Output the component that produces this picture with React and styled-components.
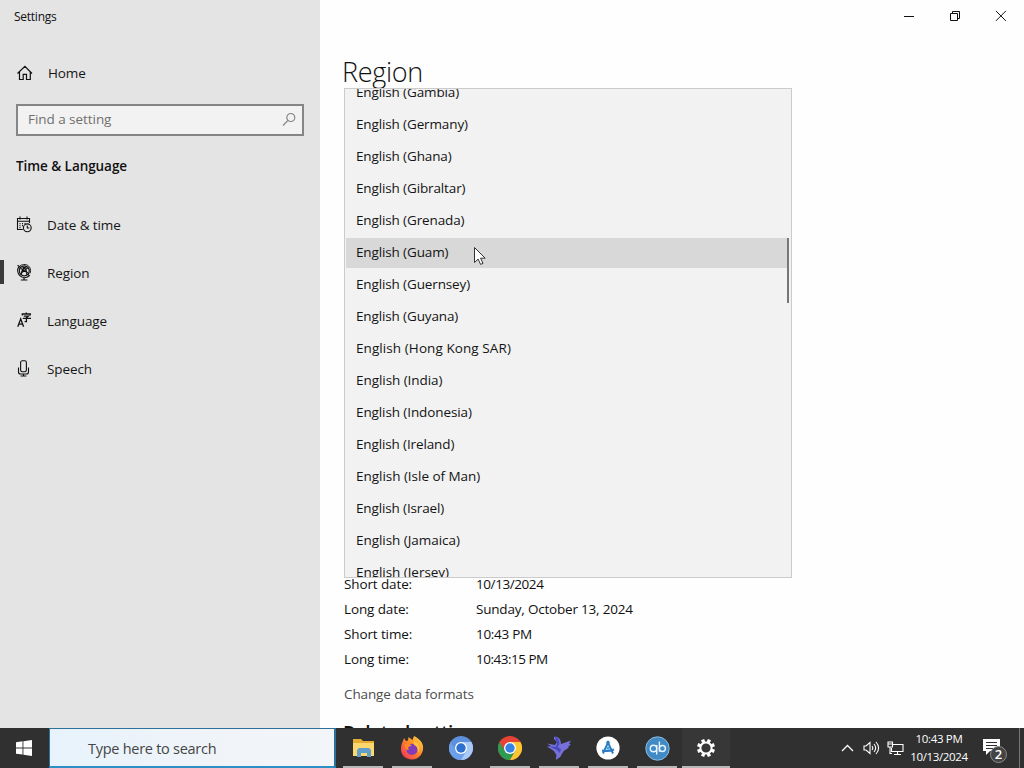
import React from 'react';
import styled, { createGlobalStyle } from 'styled-components';

const GlobalStyle = createGlobalStyle`
  * {
    box-sizing: border-box;
  }

  body {
    margin: 0;
    overflow: hidden;
    font-family: 'Open Sans', 'Noto Sans', sans-serif;
    font-size: 13.5px;
    color: #111;
  }

  svg {
    display: block;
    flex: none;
  }
`;

const Desktop = styled.div`
  position: relative;
  display: flex;
  flex-direction: column;
  width: 1024px;
  height: 768px;
  overflow: hidden;
`;

const Window = styled.div`
  display: flex;
  height: 728px;
  overflow: hidden;
  background: #fefefe;
`;

// Sidebar
const Sidebar = styled.aside`
  display: flex;
  flex-direction: column;
  width: 320px;
  background: #e4e4e4;
`;

const WindowTitle = styled.div`
  height: 49px;
  padding: 8px 14px;
  font-size: 12px;
  line-height: 18px;
  letter-spacing: -0.25px;
`;

const NavItem = styled.a`
  display: flex;
  align-items: center;
  height: 48px;
  border-left: 4px solid ${({ $selected }) => ($selected ? '#3c3a38' : 'transparent')};
  border-image: ${({ $selected }) =>
    $selected
      ? 'linear-gradient(transparent 11px, #3c3a38 11px, #3c3a38 35px, transparent 35px) 0 0 0 4'
      : 'none'};
  padding-left: 12px;
  gap: 15px;
  letter-spacing: -0.1px;
  color: #161616;

  svg {
    margin-bottom: ${({ $lift }) => $lift || 0}px;
  }
`;

const SearchBox = styled.div`
  display: flex;
  align-items: center;
  justify-content: space-between;
  width: 288px;
  height: 32px;
  margin: 7px 16px 0;
  padding: 0 6px 2px 10px;
  border: 2px solid #858585;
  background: #f2f2f2;
  letter-spacing: -0.05px;
  color: #707070;
`;

const Category = styled.h2`
  height: 24px;
  margin: 18px 16px 23px;
  font-size: 13.5px;
  font-weight: 600;
  line-height: 24px;
  letter-spacing: -0.06px;
`;

// Main pane
const Main = styled.main`
  display: flex;
  flex: 1;
  flex-direction: column;
`;

const Controls = styled.div`
  display: flex;
  align-items: center;
  justify-content: flex-end;
  height: 32px;
`;

const ControlButton = styled.span`
  display: flex;
  align-items: center;
  justify-content: center;
  width: 46px;
  height: 32px;
`;

const Heading = styled.h1`
  height: 38px;
  margin: 21px 0 481px 22px;
  font-size: 27px;
  font-weight: 350;
  line-height: 38px;
  letter-spacing: -0.3px;
`;

const Formats = styled.dl`
  display: grid;
  grid-template-columns: 132px auto;
  grid-auto-rows: 25px;
  margin: 0 0 0 24px;
  line-height: 25px;
`;

const Term = styled.dt`
  letter-spacing: -0.12px;
`;

const Value = styled.dd`
  margin: 0;
  letter-spacing: ${({ $spacing }) => $spacing}px;
`;

const FormatLink = styled.a`
  height: 24px;
  margin: 10px 0 0 24px;
  line-height: 24px;
  letter-spacing: -0.12px;
  color: #4c4c4c;
`;

const Related = styled.h3`
  margin: 12px 0 0 23px;
  font-size: 19px;
  font-weight: 600;
  line-height: 30px;
  letter-spacing: -0.4px;
`;

// Open combo box list, floats over the page
const Menu = styled.div`
  position: absolute;
  top: 88px;
  left: 344px;
  width: 448px;
  height: 490px;
  overflow: hidden;
  border: 1px solid #cbcbcb;
  background: #f2f2f2;
`;

const MenuList = styled.ul`
  margin: -13px 2px 0 1px;
  padding: 0;
  list-style: none;
`;

const MenuItem = styled.li`
  height: 32px;
  padding-left: 10px;
  line-height: 32px;
  letter-spacing: ${({ $spacing }) => $spacing}px;
  color: #141414;
  background: ${({ $active }) =>
    $active
      ? 'linear-gradient(transparent 2px, #d8d8d8 2px, #d8d8d8 calc(100% - 0px))'
      : 'transparent'};
`;

const MenuThumb = styled.span`
  position: absolute;
  top: 149px;
  right: 2px;
  width: 2px;
  height: 65px;
  background: #777;
`;

const Cursor = styled.svg`
  position: absolute;
  top: 246px;
  left: 473px;
`;

// Taskbar
const Bar = styled.footer`
  display: flex;
  height: 40px;
  background: #303030;
  color: #fff;
`;

const StartButton = styled.span`
  display: flex;
  align-items: center;
  justify-content: center;
  width: 48px;
`;

const TaskSearch = styled.div`
  width: 287px;
  margin-left: 1px;
  padding-left: 38px;
  border: 1px solid #2b7199;
  border-right-width: 2px;
  border-bottom: 2px solid #2e8fc4;
  background: linear-gradient(90deg, #e7f3fc, #f0f4f9 60%, #f3f5f8);
  font-size: 14.5px;
  line-height: 39px;
  letter-spacing: -0.27px;
  color: #454545;
`;

const Apps = styled.div`
  display: flex;
  gap: 1px;
  padding-left: 3px;
`;

const AppButton = styled.span`
  display: flex;
  align-items: center;
  justify-content: center;
  width: 48px;
  height: 40px;
  padding-top: 2px;
  border-bottom: 2px solid transparent;
  border-image: ${({ $running, $active }) =>
    $running
      ? `linear-gradient(90deg, transparent ${$active ? 0 : 4}px, #b8b8b8 ${$active ? 0 : 4}px, #b8b8b8 ${
          $active ? 48 : 44
        }px, transparent ${$active ? 48 : 44}px) 0 0 2`
      : 'none'};
  background: ${({ $active }) => ($active ? '#373737' : 'transparent')};
`;

const Tray = styled.div`
  display: flex;
  align-items: center;
  margin-left: auto;
`;

const TrayIcon = styled.span`
  display: flex;
  justify-content: center;
  width: 24px;
`;

const Clock = styled.div`
  width: 64px;
  font-size: 11.5px;
  line-height: 18px;
  letter-spacing: -0.35px;
  text-align: center;
  white-space: nowrap;
`;

const ActionCenter = styled.span`
  position: relative;
  width: 24px;
  height: 24px;
  margin: 5px 12px 0 12px;
`;

const Badge = styled.span`
  position: absolute;
  top: 7px;
  left: 7px;
  width: 17px;
  height: 17px;
  border: 1px solid #8c8c8c;
  border-radius: 50%;
  background: #444;
  font-size: 13px;
  font-weight: 600;
  line-height: 15px;
  text-align: center;
`;

const ShowDesktop = styled.span`
  width: 5px;
  height: 40px;
  border-left: 1px solid #777;
`;

function HomeIcon() {
  return (
    <svg width="17" height="16" viewBox="0 0 17 16" fill="none" stroke="#111" strokeWidth="1.2">
      <path d="M1.5 8.5 8.9 1.4l7.1 7.1M3.5 7v7.5h3.7V9.4h3.3v5.1h3.8V7" />
    </svg>
  );
}

function SearchIcon() {
  return (
    <svg width="14" height="14" viewBox="0 0 14 14" fill="none" stroke="#858585" strokeWidth="1.2">
      <circle cx="8.8" cy="5.5" r="4" />
      <path d="m6 8.3-5 5.2" />
    </svg>
  );
}

function CalendarIcon() {
  return (
    <svg width="16" height="17" viewBox="0 0 16 17" fill="none" stroke="#111" strokeWidth="1.1">
      <path d="M6.8 13.5H1.5v-11h12v4.5M1.5 5.2h12M4 .5v3M11 .5v3" />
      <path d="M3.5 7.6h1M6 7.6h1M8.5 7.6h1M3.5 9.6h1M6 9.6h1M3.5 11.6h1" />
      <circle cx="11.3" cy="11.8" r="3.9" />
      <path d="M11.3 9.4v2.6h2" />
    </svg>
  );
}

function GlobeIcon() {
  return (
    <svg width="16" height="17" viewBox="0 0 16 17" fill="none" stroke="#111" strokeWidth="1.2">
      <circle cx="8.3" cy="6.8" r="5" />
      <path d="M5 4.4 11.8 9M4.9 9.4 11.6 4M6 2.6c3.3 1 5.4 4.6 4.7 8.2M5.6 11c-.6-3.6 1.4-7.2 5-8.4" />
      <path d="M2.9 2.6a7 7 0 0 0 9.9 9.6M1.6 1.2l3.2 2.6M11.8 10.2l2 1.9M8 13.8V16M4.8 16h6.6" />
      <path d="M4 1.8C7-.2 11.4-.1 13.6 3.2c1.2 2 1.3 4.4.4 6.3" strokeWidth=".9" />
    </svg>
  );
}

function LanguageIcon() {
  return (
    <svg width="16" height="16" viewBox="0 0 16 16" fill="none" stroke="#111" strokeWidth="1.3">
      <path d="m1.8 14.8 2.9-8 2.9 8M2.8 12.2h3.8" />
      <path d="M6.3 3.4V2h8v1.4M10.3.4V2M7.8 4.1h4.6l-2 1.7v3.9H8.6M6.8 6.4h8.2" />
    </svg>
  );
}

function MicIcon() {
  return (
    <svg width="16" height="17" viewBox="0 0 16 17" fill="none" stroke="#111" strokeWidth="1.1">
      <rect x="4.6" y=".8" width="5.8" height="11" rx="1.7" />
      <path d="M2.5 7.5V12q0 2 2 2h6q2 0 2-2V7.5M7.5 14v2M4.6 16h5.8" />
    </svg>
  );
}

function FolderIcon() {
  return (
    <svg width="23" height="20" viewBox="0 0 23 20">
      <path d="M1 1h8l2 2h11v15H1z" fill="#e5ad32" />
      <path d="M1 5h21v13H1z" fill="#fbd76d" />
      <path d="M5 19v-7l2-2h10l2 2v7h-4v-4H9v4z" fill="#5f9fc9" />
    </svg>
  );
}

function FirefoxIcon() {
  return (
    <svg width="24" height="24" viewBox="0 0 24 24">
      <defs>
        <linearGradient id="fox" x1="1" y1="0" x2="0" y2="1">
          <stop offset="0" stopColor="#ffe14a" />
          <stop offset=".45" stopColor="#ff8a25" />
          <stop offset="1" stopColor="#f22865" />
        </linearGradient>
      </defs>
      <path
        d="M3 5 4 2l2 3 2-.5L8.5 1l4 3L14 0c4 2 8 5 9 10 1 7-4 13.5-11 13.5S.5 18.5 1 12c.2-3 1-5 2-7z"
        fill="url(#fox)"
      />
      <circle cx="12" cy="13.4" r="5.6" fill="#843bb9" />
      <path d="M5 8c3-1 5 0 7 2-3 0-5 1-3 4-3 0-5-2-4-6z" fill="#ff8827" />
      <path d="M14 5c5 2 7 7 4 12 0-5-1-7-4-8z" fill="#ffc33c" />
    </svg>
  );
}

function ChromeIcon({ colors }) {
  return (
    <svg width="24" height="24" viewBox="0 0 24 24">
      <circle cx="12" cy="12" r="12" fill={colors[0]} />
      <path d="M1.6 6A12 12 0 0 0 12 24l5.2-9H6.8z" fill={colors[1]} />
      <path d="M22.4 6A12 12 0 0 1 12 24l5.2-9L12 6z" fill={colors[2]} />
      <circle cx="12" cy="12" r="6" fill="#fff" />
      <circle cx="12" cy="12" r="4.7" fill={colors[3]} />
    </svg>
  );
}

function BirdIcon() {
  return (
    <svg width="26" height="24" viewBox="0 0 26 24">
      <path
        d="M8 1c3-1 6 1 6.5 4l.5 3L25 4.5l-2 3.2 2 .2-3 3 .8.5-5 3.5-2 3-1.5 3-4.5 3 .6-5-2.5-4L1 10.5l4-.5L1 7.5 9 9l2-3-3-3z"
        fill="#7670d8"
      />
      <path d="M9 1c3 0 4.5 3 4.5 7l-2 3 3.5 2-1 4-4-3.5L2 10l7.5 1 1.5-3z" fill="#4a4abf" />
    </svg>
  );
}

function AppStoreIcon() {
  return (
    <svg width="24" height="24" viewBox="0 0 24 24" fill="none">
      <circle cx="12" cy="12" r="11.6" fill="#fff" />
      <path d="m7 17.5 5-11 5 11M6 14.5q6 1.5 12-1" stroke="#2d79c2" strokeWidth="1.9" />
      <circle cx="12" cy="6.5" r="1.7" fill="#2d79c2" />
      <circle cx="12" cy="12.2" r="1.6" fill="#39afe5" />
    </svg>
  );
}

function QbIcon() {
  return (
    <svg width="25" height="25" viewBox="0 0 25 25" fill="none">
      <circle cx="12.5" cy="12.5" r="11.7" fill="#418ac6" stroke="#8abce2" />
      <circle cx="8.5" cy="12.5" r="3.2" stroke="#e6f5ff" strokeWidth="1.4" />
      <path d="M11.7 9v9.5M14.4 5.5v10.3" stroke="#e6f5ff" strokeWidth="1.4" />
      <circle cx="17.4" cy="12.5" r="3" stroke="#e6f5ff" strokeWidth="1.4" />
    </svg>
  );
}

function GearIcon() {
  return (
    <svg width="20" height="20" viewBox="0 0 20 20" fill="none" stroke="#fff">
      <circle cx="10" cy="10" r="5.6" strokeWidth="2" />
      {[0, 45, 90, 135, 180, 225, 270, 315].map(angle => (
        <path key={angle} d="M10 1v3" strokeWidth="3.4" transform={`rotate(${angle + 22.5} 10 10)`} />
      ))}
    </svg>
  );
}

const navigation = [
  { label: 'Date & time', icon: <CalendarIcon />, lift: 2 },
  { label: 'Region', icon: <GlobeIcon />, selected: true, lift: 1 },
  { label: 'Language', icon: <LanguageIcon />, lift: 2 },
  { label: 'Speech', icon: <MicIcon />, lift: 2 }
];

const regions = [
  { name: 'Gambia' },
  { name: 'Germany' },
  { name: 'Ghana' },
  { name: 'Gibraltar' },
  { name: 'Grenada' },
  { name: 'Guam', active: true },
  { name: 'Guernsey' },
  { name: 'Guyana' },
  { name: 'Hong Kong SAR', spacing: 0.08 },
  { name: 'India', spacing: -0.06 },
  { name: 'Indonesia', spacing: -0.1 },
  { name: 'Ireland' },
  { name: 'Isle of Man', spacing: -0.03 },
  { name: 'Israel', spacing: -0.14 },
  { name: 'Jamaica', spacing: -0.04 },
  { name: 'Jersey', spacing: -0.04 }
];

const formats = [
  { term: 'Short date:', value: '10/13/2024', spacing: -0.42 },
  { term: 'Long date:', value: 'Sunday, October 13, 2024', spacing: -0.2 },
  { term: 'Short time:', value: '10:43 PM', spacing: -0.3 },
  { term: 'Long time:', value: '10:43:15 PM', spacing: -0.5 }
];

const apps = [
  { id: 'explorer', icon: <FolderIcon />, running: true },
  { id: 'firefox', icon: <FirefoxIcon />, running: true },
  { id: 'chromium', icon: <ChromeIcon colors={['#5d91de', '#6d9ee8', '#a9c9f7', '#2d70cf']} /> },
  {
    id: 'chrome',
    icon: <ChromeIcon colors={['#e64336', '#2d9c50', '#fbc92f', '#3484e4']} />,
    running: true
  },
  { id: 'bird', icon: <BirdIcon />, running: true },
  { id: 'store', icon: <AppStoreIcon />, running: true },
  { id: 'qb', icon: <QbIcon />, running: true },
  { id: 'settings', icon: <GearIcon />, running: true, active: true }
];

function SettingsSidebar() {
  return (
    <Sidebar>
      <WindowTitle>Settings</WindowTitle>
      <NavItem $lift={1}>
        <HomeIcon />
        Home
      </NavItem>
      <SearchBox>
        Find a setting
        <SearchIcon />
      </SearchBox>
      <Category>Time &amp; Language</Category>
      {navigation.map(item => (
        <NavItem key={item.label} $selected={item.selected} $lift={item.lift}>
          {item.icon}
          {item.label}
        </NavItem>
      ))}
    </Sidebar>
  );
}

function RegionMenu() {
  return (
    <Menu>
      <MenuList>
        {regions.map(({ name, active, spacing = -0.13 }) => (
          <MenuItem key={name} $active={active} $spacing={spacing}>
            English ({name})
          </MenuItem>
        ))}
      </MenuList>
      <MenuThumb />
    </Menu>
  );
}

function Taskbar() {
  return (
    <Bar>
      <StartButton>
        <svg width="16" height="16" viewBox="0 0 16 16" fill="#fff">
          <path d="M0 2.2 6.5 1.3v6.2H0zM7.4 1.2 16 0v7.5H7.4zM0 8.4h6.5v6.2L0 13.7zM7.4 8.4H16V16l-8.6-1.2z" />
        </svg>
      </StartButton>
      <TaskSearch>Type here to search</TaskSearch>
      <Apps>
        {apps.map(app => (
          <AppButton key={app.id} $running={app.running} $active={app.active}>
            {app.icon}
          </AppButton>
        ))}
      </Apps>
      <Tray>
        <TrayIcon>
          <svg width="13" height="8" viewBox="0 0 13 8" fill="none" stroke="#fff" strokeWidth="1.3">
            <path d="m1 7 5.5-5.5L12 7" />
          </svg>
        </TrayIcon>
        <TrayIcon>
          <svg width="17" height="14" viewBox="0 0 17 14" fill="none" stroke="#fff" strokeWidth="1.1">
            <path d="M1 5v4h2l4 3.5v-11L3 5zM9 5q1.6 2 0 4M11 3q3.4 4 0 8M13 1q5.2 6 0 12" />
          </svg>
        </TrayIcon>
        <TrayIcon>
          <svg width="17" height="15" viewBox="0 0 17 15" fill="none" stroke="#fff" strokeWidth="1.1">
            <path d="M6 3.5h10v7H4.5V7M7 13.5h7M10.5 10.5v3M1 1h4.5v5H1zM1 3h4.5M3 6v6.5h2" />
          </svg>
        </TrayIcon>
        <Clock>
          <div>10:43 PM</div>
          <div>10/13/2024</div>
        </Clock>
        <ActionCenter>
          <svg width="18" height="17" viewBox="0 0 18 17">
            <path d="M0 0h17v12H7l-4 4v-4H0z" fill="#fff" />
            <path d="M3 3.5h11M3 6.5h11M3 9.5h7" stroke="#303030" />
          </svg>
          <Badge>2</Badge>
        </ActionCenter>
        <ShowDesktop />
      </Tray>
    </Bar>
  );
}

export default function App() {
  return (
    <>
      <GlobalStyle />
      <Desktop>
        <Window>
          <SettingsSidebar />
          <Main>
            <Controls>
              <ControlButton>
                <svg width="10" height="10" viewBox="0 0 10 10" stroke="#111">
                  <path d="M0 5.5h10" />
                </svg>
              </ControlButton>
              <ControlButton>
                <svg width="10" height="10" viewBox="0 0 10 10" fill="none" stroke="#111">
                  <path d="M.5 2.5h7v7h-7zM2.5 2.5v-2h7v7h-2" />
                </svg>
              </ControlButton>
              <ControlButton>
                <svg width="12" height="12" viewBox="0 0 12 12" stroke="#111">
                  <path d="m.9.9 10 10M10.9.9l-10 10" />
                </svg>
              </ControlButton>
            </Controls>
            <Heading>Region</Heading>
            <Formats>
              {formats.map(({ term, value, spacing }) => (
                <React.Fragment key={term}>
                  <Term>{term}</Term>
                  <Value $spacing={spacing}>{value}</Value>
                </React.Fragment>
              ))}
            </Formats>
            <FormatLink>Change data formats</FormatLink>
            <Related>Related settings</Related>
          </Main>
        </Window>
        <Taskbar />
        <RegionMenu />
        <Cursor width="14" height="21" viewBox="0 0 14 21">
          <path d="M1.5 1.5v15l3.6-3.4 2.5 5.3 2.4-1-2.4-5.2h4.6z" fill="#fff" stroke="#333" />
        </Cursor>
      </Desktop>
    </>
  );
}
